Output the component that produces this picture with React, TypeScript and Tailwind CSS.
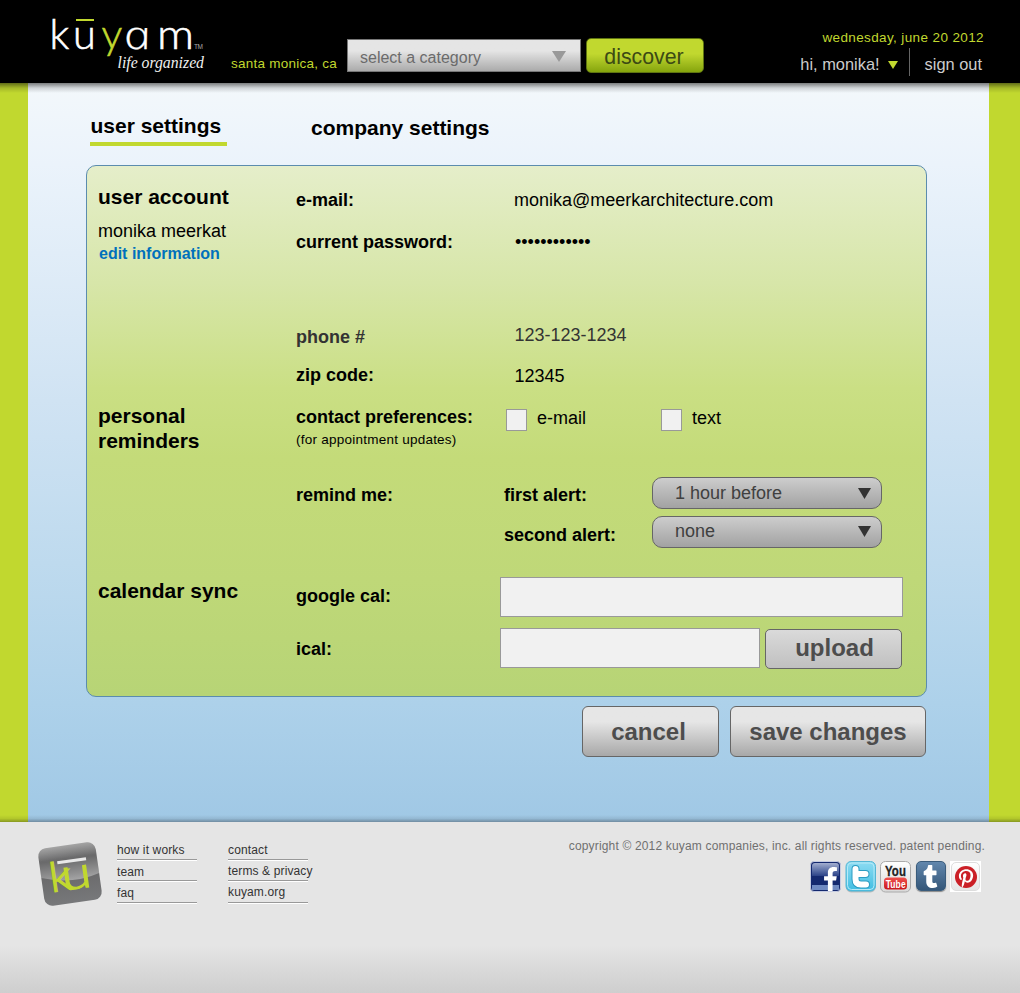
import type { ReactNode } from "react";
import { FaFacebookF, FaPinterestP, FaTumblr } from "react-icons/fa";

const Triangle = ({ className }: { className: string }) => (
  <svg viewBox="0 0 14 11" preserveAspectRatio="none" className={className}>
    <path d="M0 0H14L7 11Z" fill="currentColor" />
  </svg>
);

const Logo = () => (
  <svg width="231" height="83" viewBox="0 0 231 83" className="block shrink-0">
    <g fontFamily="'Lato', sans-serif" fontWeight="300" fontSize="41.500" fill="#fff" stroke="#fff" strokeWidth=".6">
      <text y="48.700">
        <tspan x="49.500">k</tspan>
        <tspan x="73">u</tspan>
        <tspan x="101.500" fill="#c1d82f" stroke="#c1d82f">y</tspan>
      </text>
      <text transform="translate(126.500 48.700) scale(1.22 1) skewX(11)" fontFamily="'Open Sans', sans-serif" fontStyle="italic" fontSize="39.500" strokeWidth=".3">a</text>
      <text x="157" y="48.700" textLength="37" lengthAdjust="spacingAndGlyphs">m</text>
    </g>
    <rect x="76" y="19" width="18" height="2" fill="#c1d82f" />
    <text x="194" y="49" fontFamily="'Liberation Sans', sans-serif" fontSize="6.5" fill="#aaa" textLength="9">TM</text>
    <text x="117.500" y="68" fontFamily="'Liberation Serif', serif" fontStyle="italic" fontSize="16" fill="#f0f0f0" textLength="86.500" lengthAdjust="spacingAndGlyphs">life organized</text>
  </svg>
);

const FooterMark = () => (
  <svg width="66" height="66" viewBox="0 0 66 66" className="block shrink-0">
    <defs>
      <linearGradient id="mark" x1="0" y1="0" x2="0" y2="1">
        <stop offset="0" stopColor="#9a9a9a" />
        <stop offset=".22" stopColor="#6a6a6b" />
        <stop offset=".5" stopColor="#6a6a6b" />
        <stop offset="1" stopColor="#77787a" />
      </linearGradient>
      <linearGradient id="gloss" x1="0" y1="0" x2="0" y2="1">
        <stop offset="0" stopColor="#fff" stopOpacity=".1" />
        <stop offset=".4" stopColor="#fff" stopOpacity="0" />
        <stop offset="1" stopColor="#fff" stopOpacity=".38" />
      </linearGradient>
    </defs>
    <g transform="rotate(-8 33 33)">
      <rect x="4" y="4" width="58" height="58" rx="8" fill="url(#mark)" />
      <path d="M4 33V12Q4 4 12 4H54Q62 4 62 12V36Q34 44 4 33Z" fill="url(#gloss)" />
      <g fontFamily="'Lato', sans-serif" fontWeight="300" fill="#c1d82f" stroke="#c1d82f" strokeWidth="1.200">
        <text x="12" y="48.500" fontSize="41" textLength="22" lengthAdjust="spacingAndGlyphs">k</text>
        <text x="24" y="48.500" fontSize="44" textLength="30" lengthAdjust="spacingAndGlyphs">u</text>
      </g>
      <rect x="22" y="18.500" width="29" height="3.200" fill="#e8e8e8" />
    </g>
  </svg>
);

const Twitter = () => (
  <svg width="31" height="32" viewBox="0 0 31 32">
    <defs>
      <linearGradient id="tw" x1="0" y1="0" x2="0" y2="1">
        <stop offset="0" stopColor="#8edcf2" />
        <stop offset="1" stopColor="#3fbde2" />
      </linearGradient>
    </defs>
    <rect x="1" y="1.500" width="29.500" height="30" rx="5" fill="#bdbdbd" />
    <rect x="1" y=".5" width="29.500" height="29.500" rx="5" fill="url(#tw)" stroke="#55b6d4" />
    <rect x="2.500" y="2" width="26.500" height="26.500" rx="4" fill="none" stroke="#b5e9f7" />
    <path d="M10.500 8V18Q10.500 23.500 16 23.500H21M10.500 13H20.500" fill="none" stroke="#2c9cc2" strokeWidth="8" strokeLinecap="round" />
    <path d="M10.500 8V18Q10.500 23.500 16 23.500H21M10.500 13H20.500" fill="none" stroke="#fff" strokeWidth="6" strokeLinecap="round" />
  </svg>
);

const YouTube = () => (
  <svg width="31" height="32" viewBox="0 0 31 32" className="overflow-visible">
    <defs>
      <linearGradient id="yt" x1="0" y1="0" x2="0" y2="1">
        <stop offset="0" stopColor="#fff" />
        <stop offset="1" stopColor="#d8d8d8" />
      </linearGradient>
      <linearGradient id="tube" x1="0" y1="0" x2="0" y2="1">
        <stop offset="0" stopColor="#f0524f" />
        <stop offset="1" stopColor="#c9151b" />
      </linearGradient>
    </defs>
    <rect x=".5" y=".5" width="30" height="30.500" rx="5" fill="url(#yt)" stroke="#aaa" />
    <g fontFamily="'Liberation Sans', sans-serif" fontWeight="700">
      <text x="5" y="15" fontSize="15" fill="#222" stroke="#222" strokeWidth=".3" textLength="21" lengthAdjust="spacingAndGlyphs">You</text>
      <rect x="4" y="16.500" width="23" height="12" rx="3.500" fill="url(#tube)" />
      <text x="5.700" y="26.500" fontSize="11" fill="#fff" textLength="20" lengthAdjust="spacingAndGlyphs">Tube</text>
    </g>
  </svg>
);

const Social = () => (
  <div className="flex gap-[4px]">
    <div className="relative h-[31px] w-[31px] overflow-hidden rounded-[4px] border border-[#c5cbe0] bg-[#14296f]">
      <div className="absolute inset-x-px top-px h-[13px] rounded-t-[3px] bg-linear-to-b from-[#a3aed0] to-[#2c4287]" />
      <div className="absolute inset-x-px bottom-px h-[5px] bg-[#6f8ac2]" />
      <FaFacebookF className="absolute top-[5px] left-[12px] h-[24px] w-[15px] text-white" />
    </div>
    <Twitter />
    <YouTube />
    <div className="ml-px flex h-[30px] w-[30px] items-center justify-center rounded-[5px] border border-[#3a5c7c] bg-linear-to-b from-[#6287ad] to-[#355779] pr-[2px] text-white shadow-[0_1px_1px_#888]">
      <FaTumblr className="h-[23px] w-[15px]" />
    </div>
    <div className="flex h-[31px] w-[31px] items-center justify-center bg-white">
      <div className="flex h-[29px] w-[29px] items-center justify-center rounded-[5px] border border-[#ddd] bg-linear-to-b from-white to-[#e6e6e6]">
        <div className="flex h-[22px] w-[22px] items-center justify-center rounded-full bg-[#cb2027] pt-[3px]">
          <FaPinterestP className="h-[19px] w-[16px] text-white" />
        </div>
      </div>
    </div>
  </div>
);

const Label = ({ children, className = "" }: { children: ReactNode; className?: string }) => (
  <div className={`shrink-0 text-[18px] leading-[20px] font-bold whitespace-nowrap ${className}`}>{children}</div>
);

const Value = ({ children, className = "" }: { children: ReactNode; className?: string }) => (
  <div className={`text-[18px] leading-[20px] whitespace-nowrap ${className}`}>{children}</div>
);

const Heading = ({ children }: { children: ReactNode }) => (
  <h2 className="text-[21px] leading-[25px] font-bold">{children}</h2>
);

const Select = ({ children, className }: { children: ReactNode; className: string }) => (
  <button className={`flex h-[32px] w-[230px] items-start justify-between rounded-[10px] border border-[#666] bg-linear-to-b from-[#cdcdcd] to-[#a2a2a2] pr-[10px] pl-[22px] text-[18px] leading-[20px] text-[#404040] ${className}`}>
    <span>{children}</span>
    <Triangle className="mt-[5px] h-[11px] w-[13px] text-[#333]" />
  </button>
);

const FooterLink = ({ children, className }: { children: ReactNode; className: string }) => (
  <a className={`flex w-[80px] flex-col justify-between border-b border-white whitespace-nowrap ${className}`}>
    {children}
    <span className="h-px w-full bg-[#999]" />
  </a>
);

export default function App() {
  return (
    <div className="flex h-[993px] w-[1020px] flex-col overflow-hidden font-['Liberation_Sans',Arial,sans-serif] text-black">
      <header className="flex h-[83px] shrink-0 bg-black">
        <Logo />
        <div className="mt-[56px] w-[116px] text-[13.500px] leading-[16px] tracking-[0.240px] whitespace-nowrap text-[#c1d82f]">santa monica, ca</div>
        <button className="mt-[39px] flex h-[33px] w-[234px] items-start justify-between border border-[#777] bg-linear-to-b from-[#e5e5e5] from-35% to-[#ababab] pt-[9px] pr-[14px] pl-[12px] text-[16px] leading-[18px] text-[#6b6b6b]">
          select a category
          <Triangle className="mt-[2px] h-[11px] w-[14px] text-[#999]" />
        </button>
        <button className="mt-[38px] ml-[5px] h-[35px] w-[118px] rounded-[5px] border border-[#5f7510] bg-linear-to-b from-[#c1d82f] from-45% to-[#86a50c] pt-[3px] pr-[2px] text-[21.300px] leading-[23px] text-[#3c4a14]">discover</button>
        <div className="mt-[30px] flex flex-1 flex-col items-end pr-[36px]">
          <div className="text-[13.500px] leading-[16px] tracking-[0.380px] text-[#c1d82f]">wednesday, june 20 2012</div>
          <div className="mt-[2px] flex h-[28px] pr-[2px] text-[16.400px] leading-[19px] text-[#ccc]">
            <span className="mt-[7px]">hi, monika!</span>
            <Triangle className="mt-[13px] mr-[11px] ml-[8px] h-[8px] w-[10px] text-[#c1d82f]" />
            <span className="mr-[15px] w-px bg-[#666]" />
            <span className="mt-[7px]">sign out</span>
          </div>
        </div>
      </header>

      <main className="relative h-[739px] shrink-0 bg-[#c1d82f] pr-[31px] pl-[28px]">
        <div className="h-full bg-[linear-gradient(to_bottom,#f3f8fb_0%,#ebf3fb_11%,#d0e3f3_43%,#bedaee_65%,#add1ea_84%,#a0c8e5_100%)] pl-[58px]">
          <nav className="flex h-[82px] text-[21px] leading-[23px] font-bold">
            <a className="mt-[31px] ml-[4px] h-[32px] w-[137px] border-b-[4px] border-[#c1d82f] pl-[0.500px]">user settings</a>
            <a className="mt-[33px] ml-[84px]">company settings</a>
          </nav>

          <div className="h-[532px] w-[841px] rounded-[10px] border border-[#5b8cae] bg-[linear-gradient(to_bottom,#e5eeca_0%,#d7e6a9_22%,#cadf84_42%,#c4db79_55%,#bfd878_78%,#b7d476_100%)] pl-[11px]">
            <section className="flex h-[238px]">
              <div className="w-[198px] shrink-0 pt-[18px]">
                <Heading>user account</Heading>
                <Value className="mt-[12px]">monika meerkat</Value>
                <a className="mt-[4px] block pl-[1px] text-[16px] leading-[18px] font-bold text-[#0071bc]">edit information</a>
              </div>
              <div className="pt-[24px]">
                <div className="flex h-[42px]"><Label className="w-[218px]">e-mail:</Label><Value>monika@meerkarchitecture.com</Value></div>
                <div className="flex h-[95px]"><Label className="w-[219px]">current password:</Label><Value>••••••••••••</Value></div>
                <div className="flex h-[38px] text-[#333]"><Label className="w-[218.500px]">phone #</Label><Value className="-mt-[2px]">123-123-1234</Value></div>
                <div className="flex"><Label className="w-[218.500px]">zip code:</Label><Value className="mt-px">12345</Value></div>
              </div>
            </section>

            <section className="flex h-[173px]">
              <div className="-mt-px w-[198px] shrink-0">
                <div className="w-[140px]"><Heading>personal reminders</Heading></div>
              </div>
              <div>
                <div className="flex h-[73px] pt-[3px]">
                  <div className="w-[210px]">
                    <Label>contact preferences:</Label>
                    <div className="mt-[5px] text-[13.500px] leading-[16px] tracking-[0.240px]">(for appointment updates)</div>
                  </div>
                  <label className="flex h-[24px] w-[155px] gap-[10px]"><span className="mt-[2px] h-[22px] w-[21px] border border-[#999] bg-[#f1f1f1]" /><Value className="mt-px">e-mail</Value></label>
                  <label className="flex h-[24px] gap-[10px]"><span className="mt-[2px] h-[22px] w-[21px] border border-[#999] bg-[#f1f1f1]" /><Value className="mt-px">text</Value></label>
                </div>
                <div className="flex">
                  <Label className="mt-[8px] w-[208px]">remind me:</Label>
                  <div>
                    <div className="flex h-[39px]"><Label className="mt-[8px] w-[148px]">first alert:</Label><Select className="pt-[5px]">1 hour before</Select></div>
                    <div className="flex"><Label className="mt-[9px] w-[148px]">second alert:</Label><Select className="pt-[4px]">none</Select></div>
                  </div>
                </div>
              </div>
            </section>

            <section className="flex">
              <div className="w-[198px] shrink-0 pt-px"><Heading>calendar sync</Heading></div>
              <div>
                <div className="flex h-[51px]">
                  <Label className="mt-[9px] w-[204px]">google cal:</Label>
                  <input className="h-[40px] w-[403px] border border-[#999] bg-[#f1f1f1]" />
                </div>
                <div className="flex">
                  <Label className="mt-[11px] w-[204px]">ical:</Label>
                  <input className="h-[40px] w-[260px] border border-[#999] bg-[#f1f1f1]" />
                  <button className="mt-px ml-[5px] h-[40px] w-[137px] rounded-[5px] border border-[#666] bg-linear-to-b from-[#dadada] to-[#c0c0c0] pb-[3px] pl-[2px] text-[24px] leading-[27px] font-bold text-[#4d4d4d]">upload</button>
                </div>
              </div>
            </section>
          </div>

          <div className="mt-[9px] flex w-[840px] justify-end gap-[11px] text-[24px] leading-[27px] font-bold text-[#4d4d4d]">
            <button className="h-[51px] w-[137px] rounded-[6px] border border-[#666] bg-linear-to-b from-[#e6e6e6] from-30% to-[#a8a8a8] pr-[4px] pb-px">cancel</button>
            <button className="h-[51px] w-[196px] rounded-[6px] border border-[#666] bg-linear-to-b from-[#e6e6e6] from-30% to-[#a8a8a8] pb-px">save changes</button>
          </div>
        </div>
        <div className="absolute inset-x-0 top-0 h-[10px] bg-linear-to-b from-black/50 via-black/15 to-transparent" />
        <div className="absolute inset-x-0 bottom-0 h-[7px] bg-linear-to-t from-black/30 via-black/8 to-transparent" />
      </main>

      <footer className="flex h-[171px] bg-[linear-gradient(to_bottom,#e5e5e5_0%,#e5e5e5_72%,#cecece_100%)] pt-[19px] pl-[37px] text-[12px] leading-[14px] tracking-[0.130px] text-[#333]">
        <FooterMark />
        <div className="mt-[2px] ml-[14px] w-[111px]">
          <FooterLink className="h-[18px]">how it works</FooterLink>
          <FooterLink className="h-[21px] pt-[4px]">team</FooterLink>
          <FooterLink className="h-[22px] pt-[4px]">faq</FooterLink>
        </div>
        <div className="mt-[2px]">
          <FooterLink className="h-[18px]">contact</FooterLink>
          <FooterLink className="h-[21px] pt-[3px]">terms &amp; privacy</FooterLink>
          <FooterLink className="h-[22px] pt-[3px]">kuyam.org</FooterLink>
        </div>
        <div className="flex flex-1 flex-col items-end pr-[35px]">
          <div className="mt-[-2px] text-[12px] tracking-[0.167px] whitespace-nowrap text-[#707070]">copyright © 2012 kuyam companies, inc. all rights reserved. patent pending.</div>
          <div className="mt-[8px] mr-[4px]"><Social /></div>
        </div>
      </footer>
    </div>
  );
}
